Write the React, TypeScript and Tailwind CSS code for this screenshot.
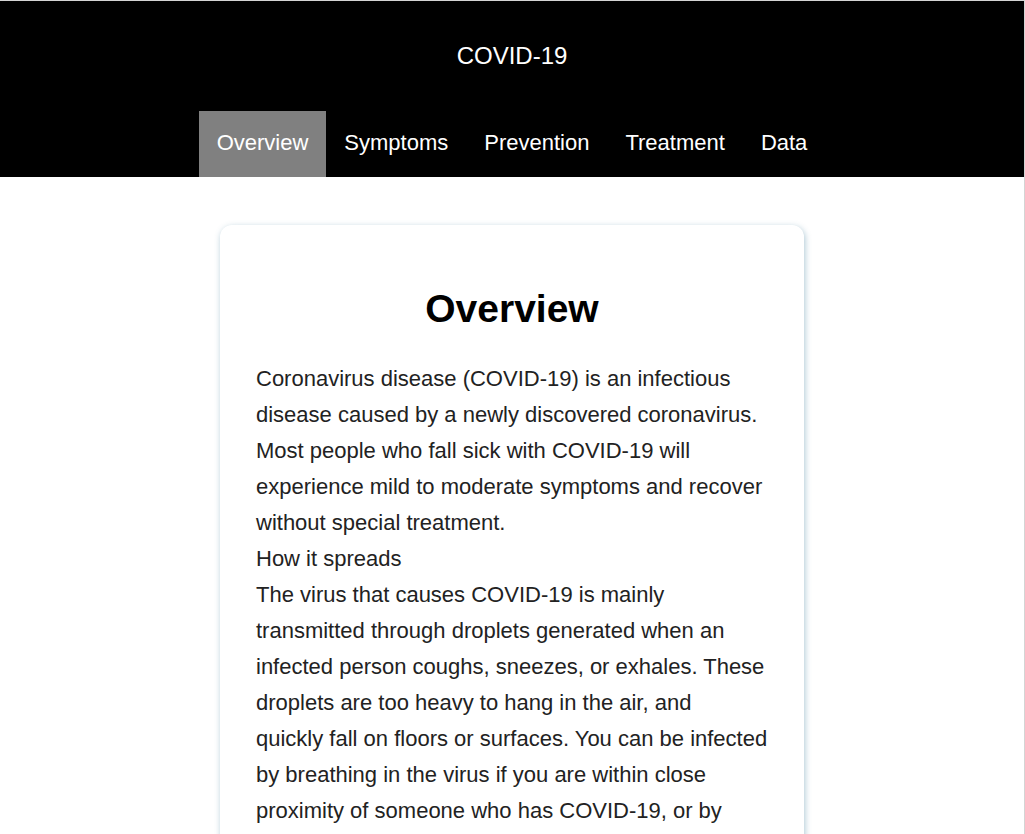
const navItems = ["Overview", "Symptoms", "Prevention", "Treatment", "Data"];

// line breaks follow the original layout
const spreadLines = [
  "The virus that causes COVID-19 is mainly",
  "transmitted through droplets generated when an",
  "infected person coughs, sneezes, or exhales. These",
  "droplets are too heavy to hang in the air, and",
  "quickly fall on floors or surfaces. You can be infected",
  "by breathing in the virus if you are within close",
  "proximity of someone who has COVID-19, or by",
  "touching a contaminated surface and then your eyes,",
  "nose or mouth.",
];

export default function App() {
  return (
    <div className="min-h-screen border-t border-r border-[#d4d4d4] bg-white font-['Liberation_Sans',Arial,sans-serif]">
      <header className="bg-black text-white">
        <div className="flex h-[110px] items-center justify-center">
          <h1 className="text-[24px] leading-none">COVID-19</h1>
        </div>
        <nav className="flex justify-center">
          {navItems.map((item, i) => (
            <a
              key={item}
              href="#"
              className={
                "flex h-[66px] items-center px-[18px] pb-[3px] text-[22px] " +
                (i === 0 ? "bg-[#808080]" : "")
              }
            >
              {item}
            </a>
          ))}
        </nav>
      </header>

      <main className="flex justify-center pt-12">
        <article className="w-[584px] rounded-xl bg-white px-9 pt-[64px] pb-10 shadow-[1px_2px_6px_rgba(70,130,160,0.45)]">
          <h2 className="text-center text-[39px] font-bold leading-none text-black">Overview</h2>
          <div className="mt-[33px] text-[22px] leading-9 text-[#222]">
            <p>
              Coronavirus disease (COVID-19) is an infectious disease caused by a newly
              discovered coronavirus. Most people who fall sick with COVID-19 will experience
              mild to moderate symptoms and recover without special treatment.
            </p>
            <p>How it spreads</p>
            <p>
              {spreadLines.map((line) => (
                <span key={line} className="block whitespace-nowrap">
                  {line}
                </span>
              ))}
            </p>
          </div>
        </article>
      </main>
    </div>
  );
}
